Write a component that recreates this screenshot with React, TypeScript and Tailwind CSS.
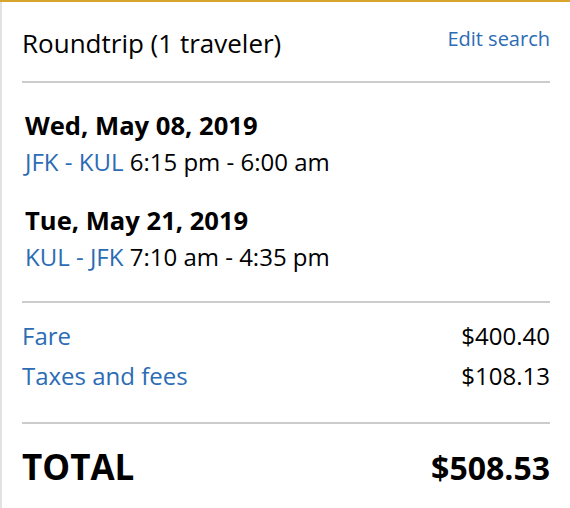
const Divider = () => <div className="h-[2px] bg-[#cccccc]" />;

const legs = [
  { date: 'Wed, May 08, 2019', route: 'JFK - KUL', time: '6:15 pm - 6:00 am' },
  { date: 'Tue, May 21, 2019', route: 'KUL - JFK', time: '7:10 am - 4:35 pm' },
];

const charges = [
  { label: 'Fare', amount: '$400.40' },
  { label: 'Taxes and fees', amount: '$108.13' },
];

export default function App() {
  return (
    <div className="w-[570px] h-[508px] bg-white font-['Open_Sans',sans-serif] text-black border-t-2 border-[#d9a42c] overflow-hidden">
      <div className="h-full border-l-2 border-[#e2e2e2] pl-[20px] pr-[20px]">
        <div className="flex items-start justify-between pt-[23px] pb-[20px]">
          <h2 className="text-[26px] leading-[36px]">Roundtrip (1 traveler)</h2>
          <a className="text-[20px] leading-[28px] text-[#2b6cb4]">Edit search</a>
        </div>
        <Divider />

        <div className="pl-[3px] pt-[25px] pb-[26px] flex flex-col gap-[23px]">
          {legs.map((leg) => (
            <div key={leg.date}>
              <div className="text-[25.6px] leading-[36px] font-bold">{leg.date}</div>
              <div className="text-[24px] leading-[36px]">
                <span className="text-[#2b6cb4]">{leg.route}</span> {leg.time}
              </div>
            </div>
          ))}
        </div>
        <Divider />

        <div className="pt-[17px] pb-[30px] flex flex-col gap-[8px]">
          {charges.map((c) => (
            <div key={c.label} className="flex justify-between text-[24px] leading-[32px]">
              <span className="text-[#2b6cb4]">{c.label}</span>
              <span>{c.amount}</span>
            </div>
          ))}
        </div>
        <Divider />

        <div className="flex justify-between items-baseline pt-[21px] font-bold leading-[44px]">
          <span className="text-[35px]">TOTAL</span>
          <span className="text-[32px]">$508.53</span>
        </div>
      </div>
    </div>
  );
}
